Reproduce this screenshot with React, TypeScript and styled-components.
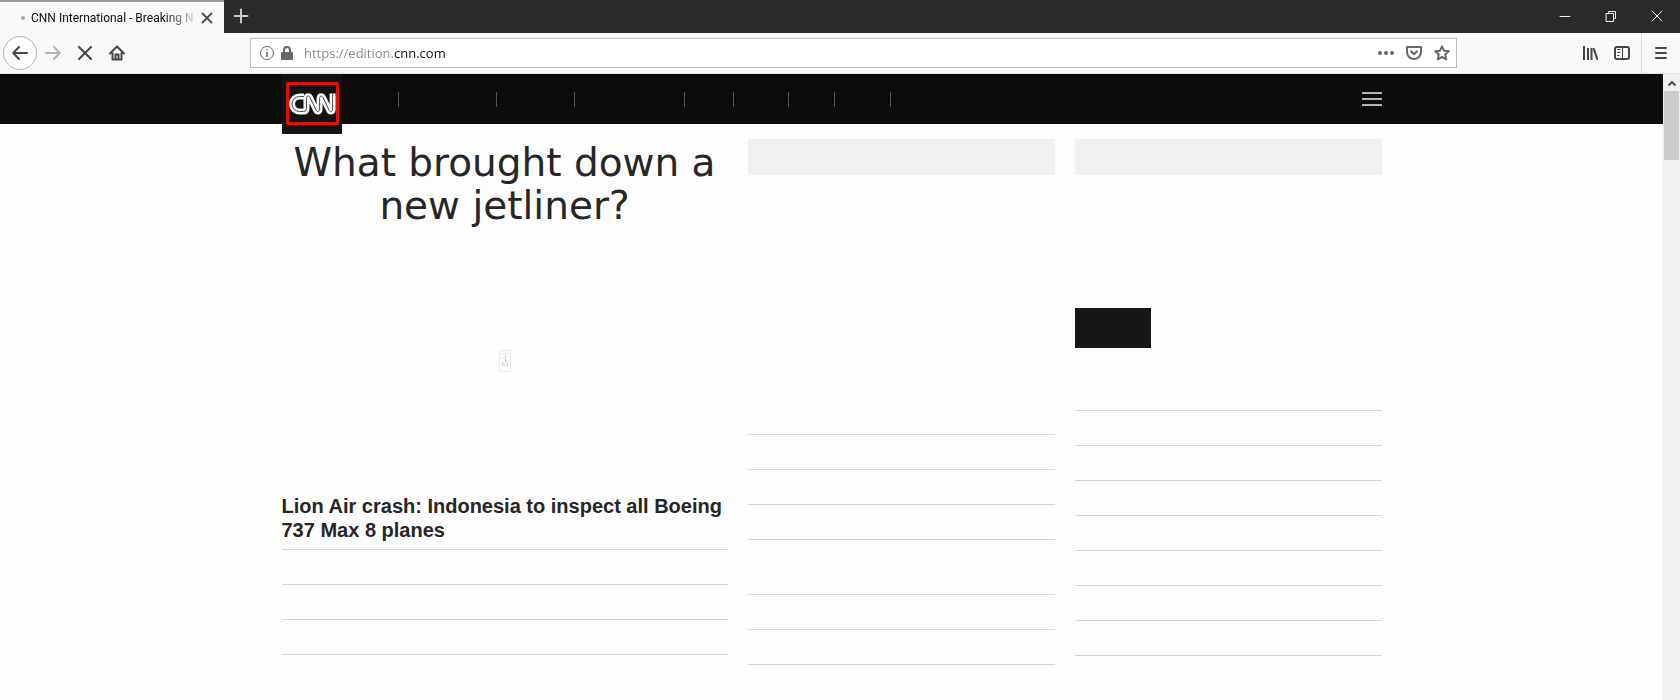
import React from "react";
import styled, { createGlobalStyle } from "styled-components";

const GlobalStyle = createGlobalStyle`
  *, *::before, *::after { box-sizing: border-box; }
  body { margin: 0; background: #fdfdfd; }
  h1, h2, ul { margin: 0; padding: 0; list-style: none; }
  svg { display: block; }
`;

const BrowserWindow = styled.div`
  display: flex;
  flex-direction: column;
  min-height: 100vh;
`;

const TabStrip = styled.div`
  display: flex;
  height: 33px;
  background: #2a2a2a;
  color: #f0f0f0;
`;

const Tab = styled.div`
  display: flex;
  align-items: center;
  width: 224px;
  padding: 0 8px 0 21px;
  border-top: 2px solid #979797;
  background: #f9f9fa;
  color: #0c0c0d;
`;

const LoadingDot = styled.span`
  flex: none;
  width: 4px;
  height: 4px;
  margin-right: 6px;
  border-radius: 50%;
  background: #a8a8a8;
`;

const TabTitle = styled.span`
  flex: 1;
  white-space: nowrap;
  font: 12px/18px Roboto, "Open Sans", sans-serif;
  mask-image: linear-gradient(to right, #000 calc(100% - 32px), transparent);
`;

const IconButton = styled.button<{ $width: number }>`
  display: flex;
  flex: none;
  align-items: center;
  justify-content: center;
  width: ${(p) => p.$width}px;
  height: 32px;
  padding: 0;
  border: 0;
  background: none;
  color: inherit;
`;

const TabCloseButton = styled(IconButton)`
  color: #4a4a4b;
`;

const WindowControls = styled.div`
  display: flex;
  margin-left: auto;
`;

const Toolbar = styled.div`
  display: flex;
  align-items: center;
  height: 41px;
  padding-left: 3px;
  border-bottom: 1px solid #e4e4e5;
  background: #f9f9fa;
  color: #464647;
`;

const BackButton = styled(IconButton)`
  height: 34px;
  border: 1px solid #b4b4b4;
  border-radius: 50%;
  background: #fdfdfd;
`;

const AddressBar = styled.div`
  display: flex;
  flex: 1;
  align-items: center;
  height: 30px;
  margin: 0 117px;
  padding-left: 6px;
  border: 1px solid #bdbdbd;
  background: #fff;
  color: #686868;
`;

const AddressInput = styled.input`
  flex: 1;
  min-width: 0;
  height: 26px;
  padding: 0 0 0 7px;
  border: 0;
  outline: 0;
  font: 13px/20px "Open Sans", "Noto Sans", sans-serif;
  color: #0c0c0d;
  background: linear-gradient(to right, #858585 96px, #0c0c0d 96px);
  background-clip: text;
  -webkit-text-fill-color: transparent;
`;

const ToolDivider = styled.span`
  width: 1px;
  height: 40px;
  margin-left: 3px;
  background: #dededf;
`;

const Viewport = styled.div`
  display: flex;
  flex: 1;
`;

const Page = styled.div`
  flex: 1;
  min-width: 0;
`;

const SiteHeader = styled.header`
  height: 50px;
  background: #0c0c0c;
`;

const Container = styled.div`
  display: flex;
  max-width: 1100px;
  margin: 0 auto;
`;

const LogoLink = styled.a`
  display: flex;
  flex: none;
  width: 60px;
  height: 60px;
  padding: 8px 3px 0 4px;
  background: #131313;
`;

const LogoFrame = styled.span`
  display: flex;
  align-items: center;
  justify-content: center;
  width: 53px;
  height: 43px;
  border: 3px solid #e0100c;
  border-radius: 2px;
`;

const Sections = styled.ul`
  display: flex;
  flex: 1;
  padding-top: 18px;
`;

const Section = styled.li<{ $width: number }>`
  width: ${(p) => p.$width}px;
  height: 15px;
  border-right: 1px solid #545454;
`;

const MenuButton = styled.button`
  display: flex;
  flex-direction: column;
  gap: 4px;
  width: 20px;
  height: 14px;
  margin-top: 18px;
  padding: 0;
  border: 0;
  background: none;
`;

const MenuBar = styled.span`
  width: 20px;
  height: 2px;
  background: #b4b4b4;
`;

const Columns = styled.main`
  display: grid;
  grid-template-columns: 446fr 307fr 307fr;
  gap: 20px;
  max-width: 1100px;
  margin: 0 auto;
  padding-top: 15px;
`;

const Column = styled.section`
  display: flex;
  flex-direction: column;
  min-width: 0;
`;

const Headline = styled.h1`
  padding-top: 2px;
  font: 400 39px/43px "DejaVu Sans", Verdana, sans-serif;
  text-align: center;
  color: #262626;
`;

const MediaSlot = styled.div`
  display: flex;
  align-items: center;
  justify-content: center;
  height: 267px;
`;

const StoryTitle = styled.h2`
  margin-bottom: 7px;
  font: 700 20px/24px "Liberation Sans", Arial, sans-serif;
  color: #262626;
`;

const Banner = styled.div`
  height: 36px;
  background: #f1f1f1;
`;

const DarkCard = styled.div`
  width: 76px;
  height: 40px;
  margin: 133px 0 62px;
  background: #161616;
`;

const RuleList = styled.ul<{ $top: number }>`
  margin-top: ${(p) => p.$top}px;
`;

const Rule = styled.li`
  height: 35px;
  border-top: 1px solid #d6d6d6;
`;

const ScrollTrack = styled.div`
  flex: none;
  width: 17px;
  padding: 0 1px;
  background: #f0f0f0;
  color: #505050;
`;

const ScrollArrow = styled.div`
  display: flex;
  align-items: center;
  justify-content: center;
  height: 17px;
`;

const ScrollThumb = styled.div`
  height: 69px;
  background: #cdcdcd;
`;

type IconProps = { size?: number; width?: number; children: React.ReactNode };
const Icon = ({ size = 16, width = 2, children }: IconProps) => (
  <svg
    width={size}
    height={size}
    viewBox={`0 0 ${size} ${size}`}
    fill="none"
    stroke="currentColor"
    strokeWidth={width}
    strokeLinecap="round"
    strokeLinejoin="round"
    aria-hidden="true"
  >
    {children}
  </svg>
);

const CnnLogo = () => {
  const ribbon =
    "M15 3.5H10.5A7.5 7.5 0 0 0 10.5 18.5H14.5Q17.5 18.5 17.5 15.5V5.5C17.5 2.5 20 2.5 21.2 4.8L27 17C28.2 19.4 30.6 19 30.6 16V5.5C30.6 2.5 33 2.5 34.2 4.8L40 17C41.2 19.4 43.6 19 43.6 16V0.5";
  return (
    <svg width="47" height="22" viewBox="0 0 47 22" fill="none" aria-hidden="true">
      <path d={ribbon} stroke="#fafafa" strokeWidth="6" />
      <path d={ribbon} stroke="#4a4a4a" strokeWidth="1" />
    </svg>
  );
};

const sectionWidths = [57, 98, 78, 110, 49, 55, 46, 56];

const Rules = ({ count, top = 0 }: { count: number; top?: number }) => (
  <RuleList $top={top}>
    {Array.from({ length: count }, (_, i) => (
      <Rule key={i} />
    ))}
  </RuleList>
);

export default function App() {
  return (
    <BrowserWindow>
      <GlobalStyle />
      <TabStrip>
        <Tab>
          <LoadingDot />
          <TabTitle>CNN International - Breaking N</TabTitle>
          <TabCloseButton $width={18} aria-label="Close tab">
            <Icon size={12} width={1.8}><path d="M1.5 1.5l9 9M10.5 1.5l-9 9" /></Icon>
          </TabCloseButton>
        </Tab>
        <IconButton $width={34} aria-label="New tab">
          <Icon size={16} width={2}><path d="M8 1.5v13M1.5 8h13" stroke="#c9c9c9" /></Icon>
        </IconButton>
        <WindowControls>
          <IconButton $width={46} aria-label="Minimize">
            <Icon size={12} width={1}><path d="M1 6.5h10" /></Icon>
          </IconButton>
          <IconButton $width={46} aria-label="Restore">
            <Icon size={12} width={1}><path d="M1.5 3.5h7v8h-7zM3.5 3.5v-2h7v7h-2" /></Icon>
          </IconButton>
          <IconButton $width={46} aria-label="Close">
            <Icon size={12} width={1}><path d="M1 1l10 10M11 1L1 11" /></Icon>
          </IconButton>
        </WindowControls>
      </TabStrip>

      <Toolbar>
        <BackButton $width={34} aria-label="Back">
          <Icon width={2}><path d="M15 8H1.500M7 2L1.200 8L7 14" /></Icon>
        </BackButton>
        <IconButton $width={32} aria-label="Forward" disabled>
          <Icon width={2}><path d="M1 8h13.500M9 2l5.800 6L9 14" stroke="#b3b3b4" /></Icon>
        </IconButton>
        <IconButton $width={32} aria-label="Stop">
          <Icon width={2}><path d="M2 2l12 12M14 2L2 14" /></Icon>
        </IconButton>
        <IconButton $width={32} aria-label="Home">
          <Icon width={2}>
            <path d="M1 8.500L8 1.500l7 7M3.500 8v6.500h9V8" />
            <path d="M6.500 14V9.500h3V14" />
          </Icon>
        </IconButton>
        <AddressBar>
          <IconButton $width={20} aria-label="Site information">
            <Icon width={1}>
              <circle cx="8" cy="8" r="6.500" />
              <path d="M8 7.500v4M8 4.700v.1" strokeWidth="1.600" />
            </Icon>
          </IconButton>
          <IconButton $width={20} aria-label="Connection security">
            <Icon width={2}>
              <path d="M5 7V5a3 3 0 0 1 6 0v2" />
              <rect x="3" y="8" width="10" height="6" fill="currentColor" />
            </Icon>
          </IconButton>
          <AddressInput aria-label="Address" defaultValue="https://edition.cnn.com" />
          <IconButton $width={28} aria-label="Page actions">
            <Icon width={4}><path d="M2 8h.01M8 8h.01M14 8h.01" /></Icon>
          </IconButton>
          <IconButton $width={28} aria-label="Save to Pocket">
            <Icon width={2}>
              <path d="M1 2h14v5a7 7 0 0 1-14 0z" />
              <path d="M5 6.200l3 3 3-3" />
            </Icon>
          </IconButton>
          <IconButton $width={28} aria-label="Bookmark">
            <Icon width={2}>
              <path d="M8 1.300l2 4.400 4.800.5-3.600 3.200 1 4.900L8 11.900l-4.200 2.400 1-4.900L1.200 6.200 6 5.700z" />
            </Icon>
          </IconButton>
        </AddressBar>
        <IconButton $width={32} aria-label="Library">
          <Icon width={2}><path d="M2 1v14M6 3v12M9.500 3v12" strokeLinecap="butt" /><path d="M11.500 3L15.500 15" strokeLinecap="butt" /></Icon>
        </IconButton>
        <IconButton $width={32} aria-label="Sidebars">
          <Icon width={2}>
            <rect x="1" y="2" width="14" height="12" rx="2" />
            <path d="M8.500 2v12" strokeWidth="1" />
            <path d="M3.500 4.500H6M3.500 7.500H6M3.500 10.500H5" strokeWidth="1" />
          </Icon>
        </IconButton>
        <ToolDivider />
        <IconButton $width={38} aria-label="Open menu">
          <Icon width={2}><path d="M3 3h10M3 8h10M3 13h10" /></Icon>
        </IconButton>
      </Toolbar>

      <Viewport>
        <Page>
          <SiteHeader>
            <Container>
              <LogoLink href="#" aria-label="CNN home">
                <LogoFrame><CnnLogo /></LogoFrame>
              </LogoLink>
              <Sections>
                {sectionWidths.map((w, i) => (
                  <Section key={i} $width={w} />
                ))}
              </Sections>
              <MenuButton aria-label="Menu">
                <MenuBar />
                <MenuBar />
                <MenuBar />
              </MenuButton>
            </Container>
          </SiteHeader>

          <Columns>
            <Column>
              <Headline>What brought down a new jetliner?</Headline>
              <MediaSlot>
                <svg width="12" height="24" viewBox="0 0 12 24" fill="none" aria-hidden="true">
                  <path d="M.5 1.500h11v21H.5zM1 4.500h10M2 9.500h3M2 12.500h3" stroke="#ececec" />
                  <path d="M6.500 6v8M3.500 14v3M8.500 14v3M3 14.500h2M7 14.500h2M5 15l1 2" stroke="#cfcfcf" />
                </svg>
              </MediaSlot>
              <StoryTitle>Lion Air crash: Indonesia to inspect all Boeing 737 Max 8 planes</StoryTitle>
              <Rules count={4} />
            </Column>
            <Column>
              <Banner />
              <Rules count={4} top={259} />
              <Rules count={3} top={20} />
            </Column>
            <Column>
              <Banner />
              <DarkCard />
              <Rules count={8} />
            </Column>
          </Columns>
        </Page>
        <ScrollTrack>
          <ScrollArrow>
            <Icon size={10} width={2}><path d="M2 7l3-3 3 3" /></Icon>
          </ScrollArrow>
          <ScrollThumb />
        </ScrollTrack>
      </Viewport>
    </BrowserWindow>
  );
}
